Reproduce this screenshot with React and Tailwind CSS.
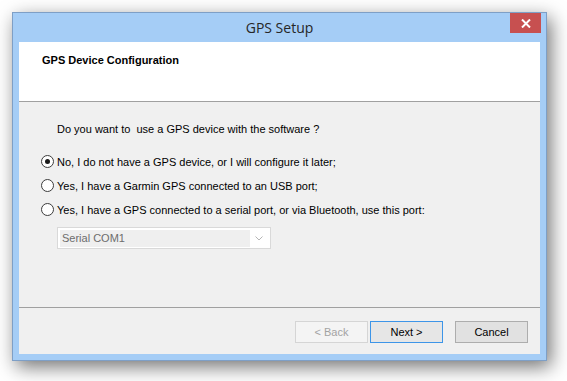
import { useState } from 'react';

const Radio = ({ checked, label, onSelect }) => {
  return (
    <label className="flex items-center gap-[3px] h-[13px] cursor-default" onClick={onSelect}>
      <span className="w-[13px] h-[13px] rounded-full border border-[#3c3c3c] bg-white flex items-center justify-center shrink-0">
        {checked && <span className="w-[5px] h-[5px] rounded-full bg-[#1a1a1a]" />}
      </span>
      <span className="text-black">{label}</span>
    </label>
  );
};

const options = [
  'No, I do not have a GPS device, or I will configure it later;',
  'Yes, I have a Garmin GPS connected to an USB port;',
  'Yes, I have a GPS connected to a serial port, or via Bluetooth, use this port:',
];

const App = () => {
  const [choice, setChoice] = useState(0);

  return (
    <div className="w-[567px] h-[381px] bg-white pt-[12px] pl-[12px] font-['Liberation_Sans',Arial,sans-serif] text-[11px] leading-[14px]">
      <div className="w-[535px] h-[349px] border border-[#7e9fc6] bg-[#a5cdf6] flex flex-col shadow-[4px_6px_18px_rgba(0,0,0,0.55)]">
        {/* Title bar */}
        <div className="relative h-[29px] flex items-center justify-center shrink-0">
          <span className="font-['Open_Sans',sans-serif] text-[14px] text-[#262626]">GPS Setup</span>
          <button className="absolute top-0 right-[5px] w-[31px] h-[20px] bg-[#c75050] flex items-center justify-center">
            <svg width="10" height="9" viewBox="0 0 10 9">
              <path d="M1 0.5 L9 8.5 M9 0.5 L1 8.5" stroke="#fff" strokeWidth="2" />
            </svg>
          </button>
        </div>

        {/* Client area */}
        <div className="flex-1 mx-[6px] mb-[6px] bg-[#f0f0f0] flex flex-col">
          <div className="h-[60px] bg-white border-b border-[#a0a0a0] pl-[23px] pt-[11px] shrink-0">
            <h1 className="font-bold text-black">GPS Device Configuration</h1>
          </div>

          <div className="flex-1 pt-[20px] pl-[22px]">
            <p className="pl-[16px] text-black">Do you want to&nbsp; use a GPS device with the software ?</p>
            <div className="mt-[19px] flex flex-col gap-[11px]">
              {options.map((opt, i) => (
                <Radio key={i} checked={choice === i} label={opt} onSelect={() => setChoice(i)} />
              ))}
            </div>
            <div className="mt-[11px] ml-[16px] w-[214px] h-[22px] border border-[#d9d9d9] bg-white flex items-center pl-[2px] pr-[7px]">
              <div className="w-[190px] h-[17px] bg-[#efefef] flex items-center pl-[2px] text-[#6d6d6d]">Serial COM1</div>
              <svg className="ml-auto" width="8" height="5" viewBox="0 0 8 5">
                <path d="M0.5 0.5 L4 4 L7.5 0.5" fill="none" stroke="#b5b5b5" strokeWidth="1" />
              </svg>
            </div>
          </div>

          <div className="h-[47px] border-t border-[#a0a0a0] pt-[13px] pr-[12px] flex justify-end items-start shrink-0">
            <button disabled className="w-[73px] h-[22px] border border-[#d5d5d5] bg-[#f4f4f4] text-[#a3a3a3]">&lt; Back</button>
            <button className="ml-[2px] w-[73px] h-[22px] border border-[#3d95e8] bg-[#e6e6e6] text-black">Next &gt;</button>
            <button className="ml-[12px] w-[73px] h-[22px] border border-[#adadad] bg-[#e1e1e1] text-black">Cancel</button>
          </div>
        </div>
      </div>
    </div>
  );
};

export default App;
